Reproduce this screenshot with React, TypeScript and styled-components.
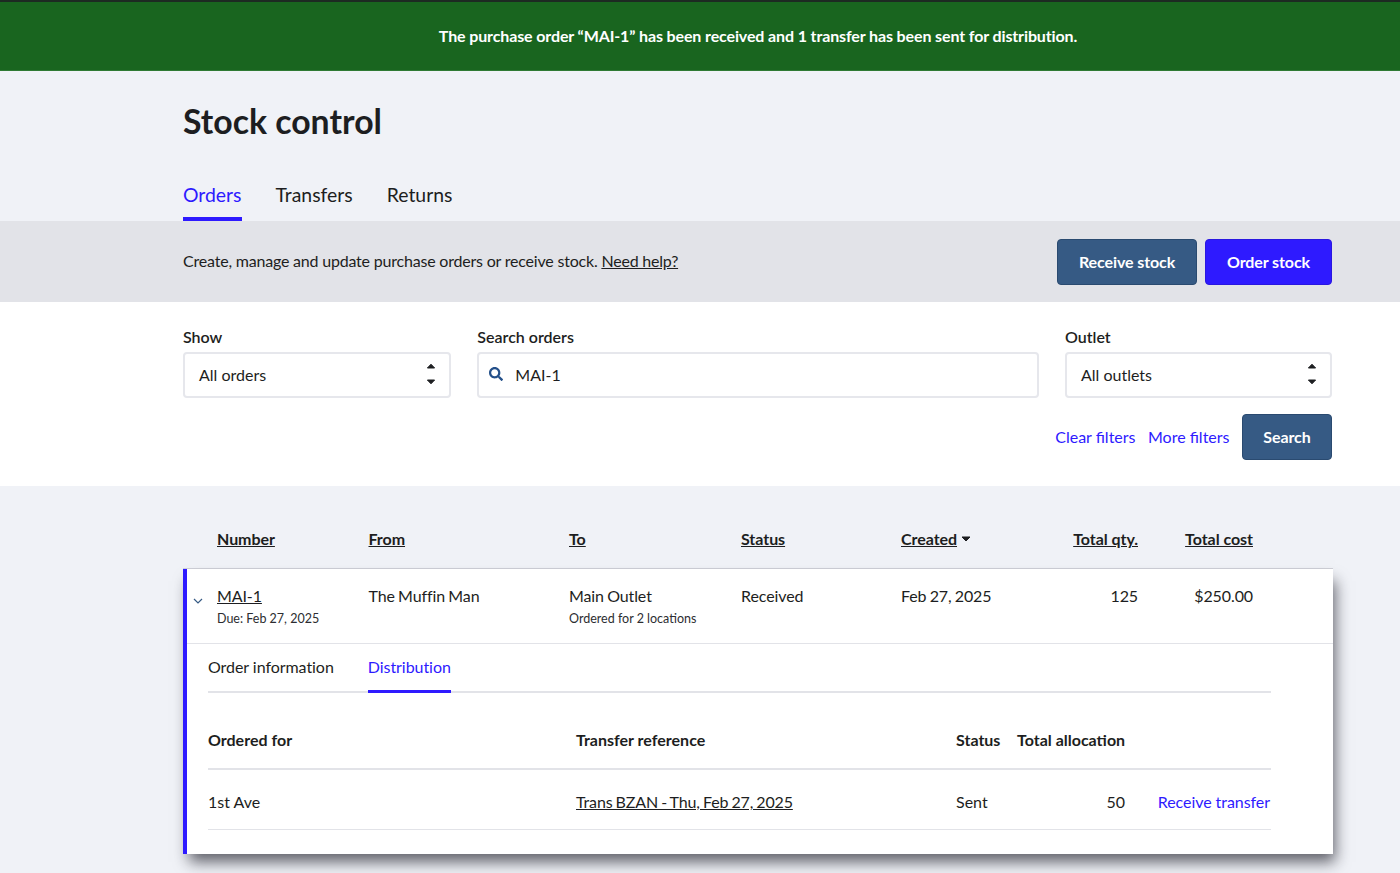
import React from "react";
import styled, { createGlobalStyle } from "styled-components";
import { FaSearch } from "react-icons/fa";

const GlobalStyle = createGlobalStyle`
	html, body {
		margin: 0;
		padding: 0;
		background: #f0f2f7;
	}
	body {
		font-family: Lato, "Open Sans", sans-serif;
		font-size: 16px;
		color: #1d1e21;
		min-height: 873px;
		overflow: hidden;
	}
	* {
		box-sizing: border-box;
	}
`;

const BLUE = "#2e1aff";
const SLATE = "#365a84";

const distCols = "368px 380px 61px 108px 1fr";

const SelectArrows = () => (
	<svg width="10" height="22" viewBox="0 0 10 22">
		<path d="M5 1.2 L8.6 5 H1.4 Z" fill="#1d1e21" stroke="#1d1e21" strokeLinejoin="round" />
		<path d="M5 20.8 L8.6 17 H1.4 Z" fill="#1d1e21" stroke="#1d1e21" strokeLinejoin="round" />
	</svg>
);

const App: React.FC = () => {
	return (
		<>
			<GlobalStyle />
			<Banner>
				The purchase order “MAI-1” has been received and 1 transfer has been sent for
				distribution.
			</Banner>
			<Header>
				<Title>Stock control</Title>
				<Tabs>
					<Tab $active>Orders</Tab>
					<Tab>Transfers</Tab>
					<Tab>Returns</Tab>
				</Tabs>
			</Header>
			<InfoBar>
				<InfoText>
					Create, manage and update purchase orders or receive stock.{" "}
					<InfoLink href="#">Need help?</InfoLink>
				</InfoText>
				<ButtonRow>
					<Button $width={140}>Receive stock</Button>
					<Button $width={127} $primary>
						Order stock
					</Button>
				</ButtonRow>
			</InfoBar>
			<Filters>
				<FilterGrid>
					<Field>
						<Label>Show</Label>
						<SelectBox>
							All orders
							<SelectArrows />
						</SelectBox>
					</Field>
					<Field>
						<Label>Search orders</Label>
						<SearchBox>
							<FaSearch size={14} color="#24508a" />
							MAI-1
						</SearchBox>
					</Field>
					<Field>
						<Label>Outlet</Label>
						<SelectBox>
							All outlets
							<SelectArrows />
						</SelectBox>
					</Field>
				</FilterGrid>
				<FilterActions>
					<ActionLink href="#">Clear filters</ActionLink>
					<ActionLink href="#">More filters</ActionLink>
					<Button $width={90}>Search</Button>
				</FilterActions>
			</Filters>
			<Orders>
				<OrderHead>
					<span />
					<HeadCell>Number</HeadCell>
					<HeadCell>From</HeadCell>
					<HeadCell>To</HeadCell>
					<HeadCell>Status</HeadCell>
					<CreatedCell>
						<HeadCell>Created</HeadCell>
						<svg width="10" height="6" viewBox="0 0 10 6">
							<path d="M1 1 H9 L5 5 Z" fill="#1d1e21" stroke="#1d1e21" strokeLinejoin="round" />
						</svg>
					</CreatedCell>
					<HeadCell $right>Total qty.</HeadCell>
					<HeadCell $right>Total cost</HeadCell>
				</OrderHead>
				<Card>
					<OrderRow>
						<Chevron>
							<svg width="10" height="6" viewBox="0 0 10 6">
								<path d="M1 1 L5 5 L9 1" fill="none" stroke={SLATE} strokeWidth="1.2" />
							</svg>
						</Chevron>
						<div>
							<OrderLink href="#">MAI-1</OrderLink>
							<SubText>Due: Feb 27, 2025</SubText>
						</div>
						<div>The Muffin Man</div>
						<div>
							Main Outlet
							<SubText>Ordered for 2 locations</SubText>
						</div>
						<div>Received</div>
						<div>Feb 27, 2025</div>
						<RightCell>125</RightCell>
						<RightCell>$250.00</RightCell>
					</OrderRow>
					<Detail>
						<DetailTabs>
							<DetailTab>Order information</DetailTab>
							<DetailTab $active>Distribution</DetailTab>
						</DetailTabs>
						<DistHead>
							<span>Ordered for</span>
							<span>Transfer reference</span>
							<span>Status</span>
							<RightCell>Total allocation</RightCell>
							<span />
						</DistHead>
						<DistRow>
							<span>1st Ave</span>
							<TransferLink href="#">Trans BZAN - Thu, Feb 27, 2025</TransferLink>
							<span>Sent</span>
							<RightCell>50</RightCell>
							<ReceiveCell>
								<TextLink href="#">Receive transfer</TextLink>
							</ReceiveCell>
						</DistRow>
					</Detail>
				</Card>
			</Orders>
		</>
	);
};

export default App;

const Banner = styled.div`
	height: 71px;
	padding: 0 0 0 116px;
	display: flex;
	align-items: center;
	justify-content: center;
	background: #19651f;
	border-top: 2px solid #1d2a22;
	border-bottom: 1px solid #2f7a34;
	color: #fff;
	font-weight: 700;
	letter-spacing: -0.125px;
	line-height: 24px;
`;
const Header = styled.header`
	padding: 0 68px 0 183px;
`;
const Title = styled.h1`
	margin: 0;
	padding-top: 28px;
	height: 101px;
	font-size: 33.8px;
	line-height: 44px;
	font-weight: 700;
	color: #1d1e21;
`;
const Tabs = styled.nav`
	display: flex;
	gap: 34px;
	height: 49px;
`;
const Tab = styled.a<{ $active?: boolean }>`
	font-size: 19.4px;
	line-height: 46px;
	color: ${(p) => (p.$active ? BLUE : "#1d1e21")};
	border-bottom: 4px solid ${(p) => (p.$active ? BLUE : "transparent")};
`;
const InfoBar = styled.section`
	height: 81px;
	padding: 0 68px 0 183px;
	display: flex;
	align-items: center;
	justify-content: space-between;
	background: #e2e3e8;
`;
const InfoText = styled.p`
	margin: 0 0 2px;
	letter-spacing: -0.2px;
`;
const InfoLink = styled.a`
	color: inherit;
`;
const ButtonRow = styled.div`
	display: flex;
	gap: 8px;
	margin-top: 1px;
`;
const Button = styled.button<{ $width: number; $primary?: boolean }>`
	width: ${(p) => p.$width}px;
	height: 46px;
	padding: 0 0 2px;
	border: 1px solid ${(p) => (p.$primary ? "#2a17e0" : "#2a4a70")};
	border-radius: 4px;
	background: ${(p) => (p.$primary ? BLUE : SLATE)};
	color: #fff;
	font: 700 16px Lato, sans-serif;
	letter-spacing: -0.1px;
`;
const Filters = styled.section`
	height: 184px;
	padding: 24px 68px 0 183px;
	background: #fff;
`;
const FilterGrid = styled.div`
	display: grid;
	grid-template-columns: 268px 561.4px 1fr;
	column-gap: 26.3px;
`;
const Field = styled.div`
	display: flex;
	flex-direction: column;
`;
const Label = styled.label`
	height: 26px;
	line-height: 22px;
	font-weight: 600;
	color: #1d1e21;
`;
const SelectBox = styled.div`
	height: 46px;
	padding: 0 13px 2px 14px;
	display: flex;
	align-items: center;
	justify-content: space-between;
	border: 2px solid #e6e7ec;
	border-radius: 4px;
	background: #fff;
`;
const SearchBox = styled(SelectBox)`
	justify-content: flex-start;
	gap: 12px;
	padding-left: 10px;
`;
const FilterActions = styled.div`
	display: flex;
	align-items: center;
	justify-content: flex-end;
	gap: 12.5px;
	margin-top: 16px;
`;
const TextLink = styled.a`
	color: ${BLUE};
	text-decoration: none;
	letter-spacing: -0.06px;
`;
const ActionLink = styled(TextLink)`
	margin-bottom: 2px;
	letter-spacing: 0;
`;
const Orders = styled.section`
	padding: 0 67px 0 183px;
`;
const OrderHead = styled.div`
	height: 83px;
	padding: 41px 0 0 0;
	display: grid;
	grid-template-columns: 34px 151.5px 200.5px 172px 160px 170px 67px 115px 1fr;
	line-height: 24px;
	letter-spacing: -0.05px;
	border-bottom: 1px solid #cfd0d8;
`;
const HeadCell = styled.span<{ $right?: boolean }>`
	font-weight: 700;
	text-decoration: underline;
	text-align: ${(p) => (p.$right ? "right" : "left")};
`;
const CreatedCell = styled.span`
	display: flex;
	align-items: center;
	align-self: start;
	gap: 4px;
`;
const Card = styled.article`
	height: 285px;
	background: #fff;
	border-left: 4px solid ${BLUE};
	box-shadow: 4px 10px 14px -2px rgba(20, 20, 30, 0.65);
`;
const OrderRow = styled.div`
	height: 75px;
	padding-top: 15px;
	display: grid;
	grid-template-columns: 30px 151.5px 200.5px 172px 160px 170px 67px 115px 1fr;
	line-height: 24px;
	letter-spacing: -0.1px;
	word-spacing: -0.8px;
	border-bottom: 1px solid #e2e3e8;
`;
const Chevron = styled.div`
	padding: 14px 0 0 6px;
	line-height: 0;
`;
const OrderLink = styled.a`
	color: inherit;
`;
const TransferLink = styled.a`
	color: inherit;
	letter-spacing: -0.15px;
	word-spacing: -0.8px;
`;
const SubText = styled.div`
	font-size: 12.5px;
	line-height: 18px;
	margin-top: 2px;
	letter-spacing: 0;
	word-spacing: 0;
	color: #2c2d31;
`;
const RightCell = styled.div`
	text-align: right;
	white-space: nowrap;
`;
const ReceiveCell = styled(RightCell)`
	padding-right: 1px;
`;
const Detail = styled.div`
	padding: 0 62px 0 21px;
`;
const DetailTabs = styled.div`
	display: flex;
	gap: 34px;
	height: 49px;
	border-bottom: 2px solid #e2e3e8;
`;
const DetailTab = styled.a<{ $active?: boolean }>`
	height: 49px;
	line-height: 45px;
	letter-spacing: -0.05px;
	color: ${(p) => (p.$active ? BLUE : "#1d1e21")};
	border-bottom: 3px solid ${(p) => (p.$active ? BLUE : "transparent")};
`;
const DistHead = styled.div`
	height: 77px;
	padding-top: 35px;
	display: grid;
	grid-template-columns: ${distCols};
	font-weight: 700;
	line-height: 24px;
	border-bottom: 2px solid #e2e3e8;
`;
const DistRow = styled.div`
	height: 60px;
	padding-top: 20px;
	display: grid;
	grid-template-columns: ${distCols};
	line-height: 24px;
	border-bottom: 1px solid #e2e3e8;
`;
